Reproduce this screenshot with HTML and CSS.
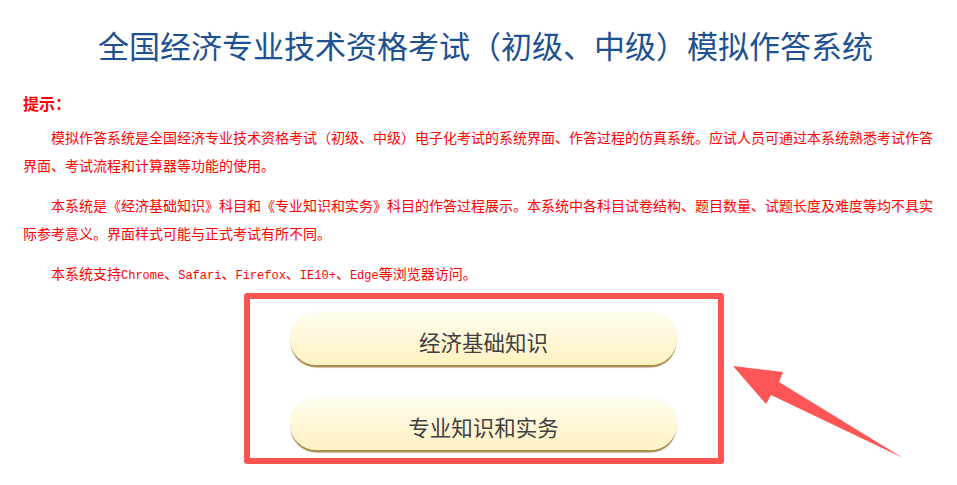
FILE: index.html
```html
<!DOCTYPE html>
<html lang="zh-CN">
<head>
<meta charset="utf-8">
<title>全国经济专业技术资格考试（初级、中级）模拟作答系统</title>
<link rel="stylesheet" href="styles.css">
</head>
<body>
<div class="page">
  <h1 class="title">全国经济专业技术资格考试（初级、中级）模拟作答系统</h1>
  <div class="notice">
    <div class="notice-head">提示：</div>
    <p class="para">模拟作答系统是全国经济专业技术资格考试（初级、中级）电子化考试的系统界面、作答过程的仿真系统。应试人员可通过本系统熟悉考试作答界面、考试流程和计算器等功能的使用。</p>
    <p class="para">本系统是《经济基础知识》科目和《专业知识和实务》科目的作答过程展示。本系统中各科目试卷结构、题目数量、试题长度及难度等均不具实际参考意义。界面样式可能与正式考试有所不同。</p>
    <p class="para">本系统支持<span class="en">Chrome</span>、<span class="en">Safari</span>、<span class="en">Firefox</span>、<span class="en">IE10+</span>、<span class="en">Edge</span>等浏览器访问。</p>
  </div>
  <div class="frame-wrap">
    <div class="frame">
      <a class="btn" href="#">经济基础知识</a>
      <a class="btn" href="#">专业知识和实务</a>
    </div>
  </div>
  <svg class="arrow" width="957" height="485" viewBox="0 0 957 485" aria-hidden="true">
    <polygon points="733,366 783,372 779,382 903,458 771,395 766,404" fill="#fe5656"/>
  </svg>
</div>
</body>
</html>
```
FILE: styles.css
```css
html, body {
  margin: 0;
  padding: 0;
  background: #ffffff;
}
body {
  font-family: "Noto Sans CJK SC", "Noto Sans", sans-serif;
}
.page {
  position: relative;
  width: 957px;
  height: 485px;
  overflow: hidden;
}
.title {
  margin: 0;
  padding: 25px 0 0 14px;
  height: 40px;
  line-height: 40px;
  font-size: 31px;
  font-weight: 400;
  color: #1e5192;
  text-align: center;
  white-space: nowrap;
}
.notice {
  padding: 28px 0 0 23px;
  width: 916px;
  color: #ff0000;
}
.notice-head {
  font-size: 16px;
  font-weight: 700;
  line-height: 20px;
  height: 20px;
}
.para {
  margin: 10px 0 0 0;
  height: auto;
  font-size: 14px;
  line-height: 28px;
  text-indent: 28px;
}
.para + .para {
  margin-top: 12px;
}
.en {
  font-family: "Liberation Mono", monospace;
  font-size: 12px;
  line-height: 12px;
}
.frame-wrap {
  display: flex;
  justify-content: center;
  padding: 6px 0 0 10px;
}
.frame {
  width: 480px;
  height: 171px;
  box-sizing: border-box;
  border: 6px solid #fe5353;
  border-radius: 3px;
  padding-top: 13px;
  display: flex;
  flex-direction: column;
  align-items: center;
  gap: 32px;
}
.btn {
  display: block;
  width: 387px;
  height: 53px;
  box-sizing: border-box;
  padding-top: 9px;
  line-height: 42px;
  border-radius: 27px;
  background: linear-gradient(#fffcee 0%, #fff7d8 50%, #fff1c2 100%);
  box-shadow: 0 3px 1px -0.5px #a68d4e, 0 0 1px rgba(170, 150, 100, 0.35);
  text-align: center;
  text-decoration: none;
  font-size: 21.5px;
  color: #404040;
}
.arrow {
  position: absolute;
  left: 0;
  top: 0;
  pointer-events: none;
}
```
